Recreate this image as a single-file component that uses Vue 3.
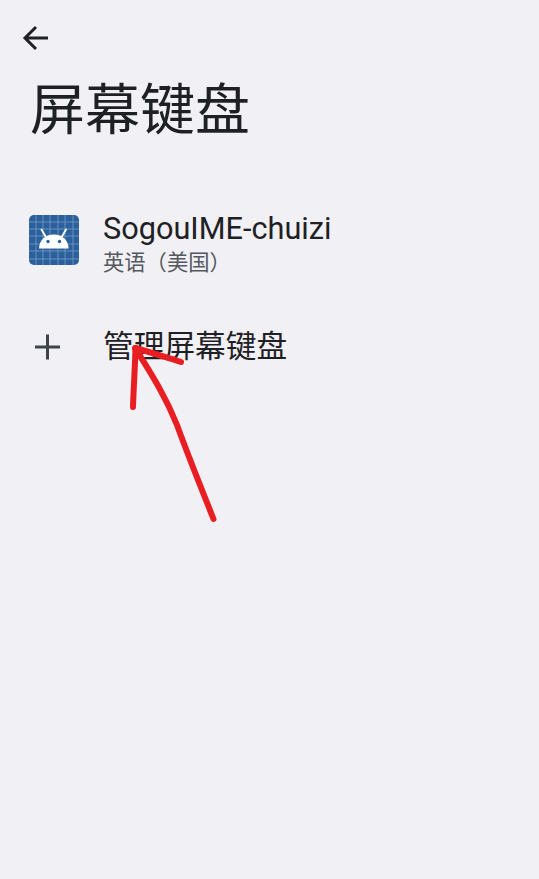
<script setup>
const items = [{ name: 'SogouIME-chuizi', sub: '英语（美国）' }]
const gridLines = [7, 14, 21, 29, 36, 44]
</script>

<template>
  <div class="page">
    <header class="top">
      <button class="back" aria-label="返回">
        <svg viewBox="0 0 28 28" width="28" height="28" fill="none" stroke="#1f2023" stroke-width="3">
          <path d="M26 14H3.500M14 3 3 14l11 11" />
        </svg>
      </button>
      <h1 class="title">屏幕键盘</h1>
    </header>

    <section class="list">
      <div v-for="item in items" :key="item.name" class="row app-row">
        <div class="lead">
          <svg class="app-icon" viewBox="0 0 50 50" width="50" height="50">
            <rect width="50" height="50" rx="5" fill="#2b609c" />
            <g stroke="#7fa3c9" stroke-width="0.7">
              <path v-for="p in gridLines" :key="'v' + p" :d="`M${p} 0V50`" />
              <path v-for="p in gridLines" :key="'h' + p" :d="`M0 ${p}H50`" />
            </g>
            <path d="M10 33.500c.2-8 6.200-14 14.800-14s14.600 6 14.800 14z" fill="#fff" />
            <path d="M16.500 21.500 12.500 14.500M33 21.500l4-7" stroke="#fff" stroke-width="1.800" stroke-linecap="round" />
            <circle cx="19" cy="26.500" r="1.700" fill="#2b609c" />
            <circle cx="30.500" cy="26.500" r="1.700" fill="#2b609c" />
          </svg>
        </div>
        <div class="texts">
          <div class="name">{{ item.name }}</div>
          <div class="sub">{{ item.sub }}</div>
        </div>
      </div>

      <div class="row add-row">
        <div class="lead">
          <svg viewBox="0 0 28 28" width="28" height="28" fill="none" stroke="#3f4449" stroke-width="3">
            <path d="M14.500 1.500V26.500M2 14H27" />
          </svg>
        </div>
        <div class="add-label">管理屏幕键盘</div>
      </div>
    </section>

    <svg class="scribble" viewBox="0 0 539 879" width="539" height="879" fill="none" stroke="#e91e23" stroke-linecap="round" stroke-linejoin="round">
      <path stroke-width="6" d="M133 407C133.500 390 135 368 135.500 348" />
      <path stroke-width="6" d="M135 348C150 352 165 357 181 362" />
      <path stroke-width="6" d="M137 351C150 372 165 395 177 425C189 458 202 490 213.500 519" />
    </svg>
  </div>
</template>

<style scoped>
.page {
  position: relative;
  width: 539px;
  height: 879px;
  overflow: hidden;
  background: #f0f0f5;
  color: #1f2023;
  font-family: Roboto, "Noto Sans CJK SC", sans-serif;
}
.top {
  padding: 24px 0 0 22px;
}
.back {
  display: block;
  width: 28px;
  height: 28px;
  padding: 0;
  border: 0;
  background: none;
}
.title {
  margin: 25px 0 0 8px;
  font-size: 55px;
  line-height: 66px;
  font-weight: 400;
}
.list {
  display: flex;
  flex-direction: column;
  margin-top: 59.500px;
}
.row {
  display: flex;
  align-items: center;
}
.lead {
  width: 103px;
  flex: none;
  display: flex;
  padding-left: 29px;
  box-sizing: border-box;
}
.add-row .lead {
  padding-left: 33px;
}
.texts {
  display: flex;
  flex-direction: column;
  padding-top: 7px;
}
.name {
  font-size: 30.700px;
  line-height: 38px;
}
.sub {
  font-size: 21.300px;
  line-height: 29px;
  color: #55585e;
}
.add-row {
  margin-top: 50px;
}
.add-label {
  font-size: 30.700px;
  line-height: 40px;
}
.scribble {
  position: absolute;
  inset: 0;
  pointer-events: none;
}
</style>
